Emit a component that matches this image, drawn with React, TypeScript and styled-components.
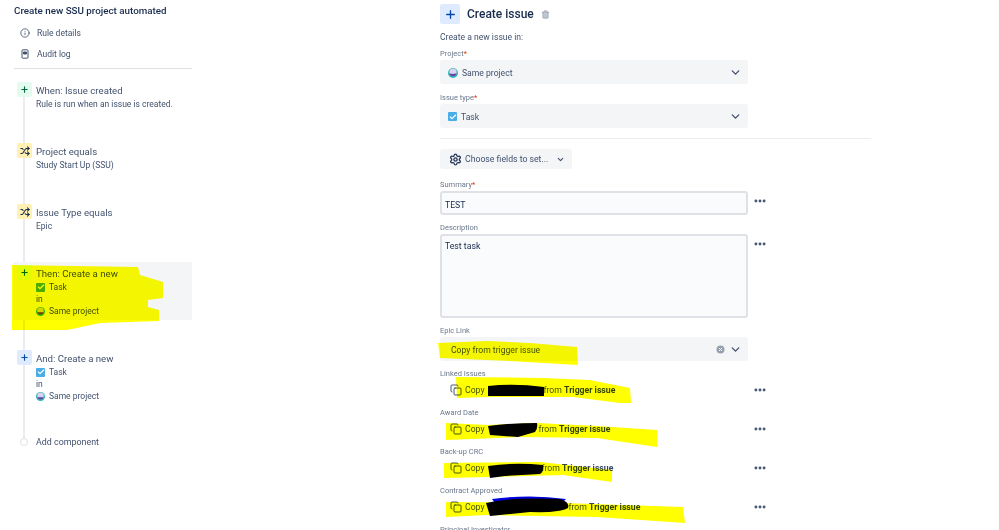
import React from "react";
import styled, { createGlobalStyle } from "styled-components";
import { Check, ChevronDown, Copy, Info, MoreHorizontal, Plus, Settings, Shuffle, Trash2 } from "lucide-react";

const Global = createGlobalStyle`
  html, body { margin: 0; padding: 0; background: #fff; }
  body { font-family: Roboto, "Noto Sans", "Liberation Sans", sans-serif; color: #172b4d; }
  * { box-sizing: border-box; }
`;

const Page = styled.div`
  position: relative;
  width: 999px;
  height: 530px;
  overflow: hidden;
  display: flex;
  background: #fff;
`;
const Sidebar = styled.aside`
  width: 178px;
  margin-left: 14px;
  padding-top: 3px;
  flex: none;
`;
const RuleTitle = styled.h1`
  margin: 0 0 4px;
  font-size: 9.8px;
  line-height: 15px;
  font-weight: 500;
  color: #172b4d;
`;
const NavItem = styled.div`
  height: 21px;
  display: flex;
  align-items: center;
  gap: 7px;
  padding-left: 6px;
  font-size: 8.5px;
  color: #42526e;
`;
const Rule = styled.hr`
  margin: 4px 0 13px;
  border: 0;
  border-top: 1px solid #dfe1e6;
`;
const Timeline = styled.div`
  position: relative;
  &::before {
    content: "";
    position: absolute;
    left: 9px;
    top: 8px;
    bottom: 12px;
    width: 2px;
    background: #ebecf0;
  }
`;
const Step = styled.div<{ $h: number }>`
  position: relative;
  height: ${(p) => p.$h}px;
  display: flex;
  gap: 5px;
  padding-left: 3px;
`;
const ActivePanel = styled.div`
  position: absolute;
  left: -1px;
  right: 0;
  top: -3px;
  height: 58px;
  background: #f4f5f7;
`;
const Badge = styled.div<{ $bg: string; $fg: string }>`
  position: relative;
  width: 15px;
  height: 15px;
  flex: none;
  border-radius: 2px;
  background: ${(p) => p.$bg};
  color: ${(p) => p.$fg};
  display: flex;
  align-items: center;
  justify-content: center;
`;
const StepBody = styled.div`
  position: relative;
  margin-left: -1px;
  padding-top: 1px;
`;
const StepTitle = styled.div`
  font-size: 9.65px;
  line-height: 15px;
  color: #42526e;
`;
const StepText = styled.div`
  font-size: 8.5px;
  line-height: 12px;
  color: #42526e;
`;
const IconLine = styled(StepText)`
  display: flex;
  align-items: center;
  gap: 4px;
`;
const AddDot = styled.div`
  position: relative;
  width: 8px;
  height: 8px;
  margin: 3px 3px 0 3px;
  flex: none;
  border-radius: 50%;
  background: #fff;
  border: 1px solid #dfe1e6;
`;
const AddText = styled.div`
  position: relative;
  font-size: 8.9px;
  line-height: 14px;
  color: #42526e;
`;

const TaskBox = styled.span<{ $size?: number }>`
  width: ${(p) => p.$size ?? 8}px;
  height: ${(p) => p.$size ?? 8}px;
  border-radius: 1px;
  background: #4bade8;
  color: #fff;
  display: inline-flex;
  align-items: center;
  justify-content: center;
  flex: none;
`;
const Task = ({ size = 9 }: { size?: number }) => (
  <TaskBox $size={size}>
    <Check size={size - 1} strokeWidth={3.5} />
  </TaskBox>
);
const Avatar = ({ size = 9 }: { size?: number }) => (
  <svg width={size} height={size} viewBox="0 0 18 18" style={{ flex: "none" }}>
    <circle cx="9" cy="9" r="9" fill="#2fb9b3" />
    <circle cx="9" cy="7.6" r="6.5" fill="#d9d2f0" />
    <path d="M2.2 9.5a7 7 0 0 0 13.6 0c-3 1.6-10.6 1.6-13.6 0z" fill="#6b3fa6" />
  </svg>
);

const Main = styled.main`
  width: 431px;
  margin-left: 248px;
  flex: none;
`;
const Header = styled.div`
  height: 24px;
  padding-top: 4px;
  display: flex;
  align-items: center;
`;
const HeaderIcon = styled.div`
  width: 20px;
  height: 20px;
  border-radius: 2px;
  background: #deebff;
  color: #0747a6;
  display: flex;
  align-items: center;
  justify-content: center;
`;
const HeaderTitle = styled.h2`
  margin: 0 7px;
  font-size: 12px;
  font-weight: 500;
  color: #172b4d;
`;
const Intro = styled.div`
  margin-top: 5px;
  height: 17px;
  font-size: 8.6px;
  line-height: 16px;
  color: #42526e;
`;
const Field = styled.div<{ $gap?: number }>`
  margin-bottom: ${(p) => p.$gap ?? 6}px;
`;
const Label = styled.div`
  height: 14px;
  font-size: 7.5px;
  line-height: 16px;
  color: #6b778c;
  b { color: #de350b; font-weight: 400; }
`;
const FormRow = styled.div`
  display: flex;
  align-items: flex-start;
`;
const Select = styled.div<{ $pl?: number }>`
  width: 308px;
  height: 24px;
  padding: 1px 6px 0 ${(p) => p.$pl ?? 8}px;
  flex: none;
  display: flex;
  align-items: center;
  gap: 4px;
  border-radius: 3px;
  background: #f4f5f7;
  font-size: 8.6px;
  color: #42526e;
`;
const Grow = styled.span`
  flex: 1;
`;
const Divider = styled.hr`
  margin: 10px 0 10px;
  border: 0;
  border-top: 1px solid #ebecf0;
`;
const ChooseButton = styled.div`
  width: 132px;
  height: 20px;
  margin-bottom: 8px;
  padding-left: 9px;
  display: flex;
  align-items: center;
  gap: 3px;
  border-radius: 3px;
  background: #f4f5f7;
  font-size: 8.7px;
  color: #42526e;
`;
const Input = styled.div<{ $h: number; $single?: boolean }>`
  width: 308px;
  height: ${(p) => p.$h}px;
  padding: ${(p) => (p.$single ? "3px 3px 0" : "4px 3px")};
  flex: none;
  display: ${(p) => (p.$single ? "flex" : "block")};
  align-items: center;
  border: 2px solid #dfe1e6;
  border-radius: 3px;
  background: #fafbfc;
  font-size: 8.7px;
  line-height: 12px;
  color: #172b4d;
`;
const More = styled.div<{ $h: number }>`
  width: 14px;
  margin-left: 5px;
  height: ${(p) => p.$h}px;
  display: flex;
  align-items: center;
  color: #42526e;
`;
const CopyRow = styled.div`
  width: 308px;
  height: 20px;
  margin-bottom: 4px;
  padding-left: 10px;
  flex: none;
  display: flex;
  align-items: center;
  gap: 3px;
  font-size: 8.7px;
  color: #42526e;
  strong { font-weight: 700; color: #344563; }
`;
const CopyText = styled.span`
  white-space: pre;
`;
const Redacted = styled.span<{ $w: number }>`
  display: inline-block;
  width: ${(p) => p.$w}px;
`;
const Marks = styled.svg`
  position: absolute;
  left: 0;
  top: 0;
  pointer-events: none;
  mix-blend-mode: multiply;
`;

const Req = () => <b>*</b>;
const Dots = ({ h = 20 }: { h?: number }) => (
  <More $h={h}>
    <MoreHorizontal size={14} strokeWidth={3} />
  </More>
);

const copies = [
  { label: "Linked Issues", w: 54.6 },
  { label: "Award Date", w: 49.6 },
  { label: "Back-up CRC", w: 52.6 },
  { label: "Contract Approved", w: 79.6 },
];

const highlights = [
  "M12 265L138 267L140 275L163 282L163 298L148 300L148 307L159 310L159 321L100 323L67 330L12 330Z",
  "M438 343L487 341L530 343L577 347L578 365L510 361L440 358Z",
  "M456 377L543 378L590 380L630 388L631 403L620 403L573 397L490 397L457 398Z",
  "M446 423L488 425L537 423L597 426L657 430L657 447L597 438L520 437L446 440Z",
  "M444 463L540 462L612 470L612 482L563 475L490 477L444 478Z",
  "M446 502L563 503L683 507L685 523L597 517L487 515L446 517Z",
];
const scribbles = [
  "M488 386Q515 383 544 387L544 396L488 396Z",
  "M488 426Q510 423 537 423Q538 429 535 432L518 437L490 435Z",
  "M488 466Q515 462 543 465Q544 472 540 474L505 476L490 478Z",
  "M486 503Q510 497 560 499Q570 502 568 508Q560 513 530 512L490 516Z",
];

export default function App() {
  return (
    <Page>
      <Global />
      <Sidebar>
        <RuleTitle>Create new SSU project automated</RuleTitle>
        <NavItem>
          <Info size={10} />
          Rule details
        </NavItem>
        <NavItem>
          <svg width="10" height="10" viewBox="0 0 10 10" fill="none" stroke="#42526e">
            <rect x="2" y="0.8" width="6" height="8.4" rx="0.8" />
            <path d="M3.5 3h3v2h-3z" fill="#42526e" />
          </svg>
          Audit log
        </NavItem>
        <Rule />
        <Timeline>
          <Step $h={61}>
            <Badge $bg="#e3fcef" $fg="#006644"><Plus size={9} strokeWidth={3} /></Badge>
            <StepBody>
              <StepTitle>When: Issue created</StepTitle>
              <StepText>Rule is run when an issue is created.</StepText>
            </StepBody>
          </Step>
          <Step $h={61}>
            <Badge $bg="#fff0b3" $fg="#172b4d"><Shuffle size={10} strokeWidth={2.5} /></Badge>
            <StepBody>
              <StepTitle>Project equals</StepTitle>
              <StepText>Study Start Up (SSU)</StepText>
            </StepBody>
          </Step>
          <Step $h={61}>
            <Badge $bg="#fff0b3" $fg="#172b4d"><Shuffle size={10} strokeWidth={2.5} /></Badge>
            <StepBody>
              <StepTitle>Issue Type equals</StepTitle>
              <StepText>Epic</StepText>
            </StepBody>
          </Step>
          <Step $h={85}>
            <ActivePanel />
            <Badge $bg="#e3fcef" $fg="#006644"><Plus size={9} strokeWidth={3} /></Badge>
            <StepBody>
              <StepTitle>Then: Create a new</StepTitle>
              <IconLine><Task />Task</IconLine>
              <StepText>in</StepText>
              <IconLine><Avatar />Same project</IconLine>
            </StepBody>
          </Step>
          <Step $h={85}>
            <Badge $bg="#deebff" $fg="#0747a6"><Plus size={9} strokeWidth={3} /></Badge>
            <StepBody>
              <StepTitle>And: Create a new</StepTitle>
              <IconLine><Task />Task</IconLine>
              <StepText>in</StepText>
              <IconLine><Avatar />Same project</IconLine>
            </StepBody>
          </Step>
          <Step $h={16}>
            <AddDot />
            <AddText>Add component</AddText>
          </Step>
        </Timeline>
      </Sidebar>
      <Main>
        <Header>
          <HeaderIcon><Plus size={13} strokeWidth={2.5} /></HeaderIcon>
          <HeaderTitle>Create issue</HeaderTitle>
          <Trash2 size={9} color="#97a0af" fill="#c1c7d0" />
        </Header>
        <Intro>Create a new issue in:</Intro>
        <Field>
          <Label>Project<Req /></Label>
          <Select><Avatar size={10} />Same project<Grow /><ChevronDown size={13} strokeWidth={2.5} /></Select>
        </Field>
        <Field>
          <Label>Issue type<Req /></Label>
          <Select><Task size={9} />Task<Grow /><ChevronDown size={13} strokeWidth={2.5} /></Select>
        </Field>
        <Divider />
        <ChooseButton>
          <Settings size={13} strokeWidth={2.5} color="#253858" />
          Choose fields to set...
          <ChevronDown size={9} strokeWidth={3} style={{ marginLeft: 5 }} />
        </ChooseButton>
        <Field $gap={5}>
          <Label>Summary<Req /></Label>
          <FormRow><Input $h={24} $single>TEST</Input><Dots /></FormRow>
        </Field>
        <Field $gap={5}>
          <Label>Description</Label>
          <FormRow><Input $h={84}>Test task</Input><Dots /></FormRow>
        </Field>
        <Field $gap={5}>
          <Label>Epic Link</Label>
          <Select $pl={11}>
            Copy from trigger issue
            <Grow />
            <svg width="9" height="9" viewBox="0 0 9 9">
              <circle cx="4.5" cy="4.5" r="4" fill="#97a0af" />
              <path d="M3 3l3 3M6 3l-3 3" stroke="#f4f5f7" strokeWidth="1" />
            </svg>
            <ChevronDown size={13} strokeWidth={2.5} />
          </Select>
        </Field>
        {copies.map((c) => (
          <Field key={c.label} $gap={1}>
            <Label>{c.label}</Label>
            <FormRow>
              <CopyRow>
                <Copy size={12} strokeWidth={1.8} color="#344563" />
                <CopyText>Copy <Redacted $w={c.w} /> from <strong>Trigger issue</strong></CopyText>
              </CopyRow>
              <Dots />
            </FormRow>
          </Field>
        ))}
        <Label>Principal Investigator</Label>
      </Main>
      <Marks width="999" height="530" viewBox="0 0 999 530">
        {highlights.map((d) => (
          <path key={d} d={d} fill="#ffff00" />
        ))}
        <path d="M489 393H544V396H489Z" fill="#0000c8" />
        <path d="M492 499Q530 494 566 499L562 503H495Z" fill="#0000e0" />
        {scribbles.map((d) => (
          <path key={d} d={d} fill="#000" />
        ))}
      </Marks>
    </Page>
  );
}
